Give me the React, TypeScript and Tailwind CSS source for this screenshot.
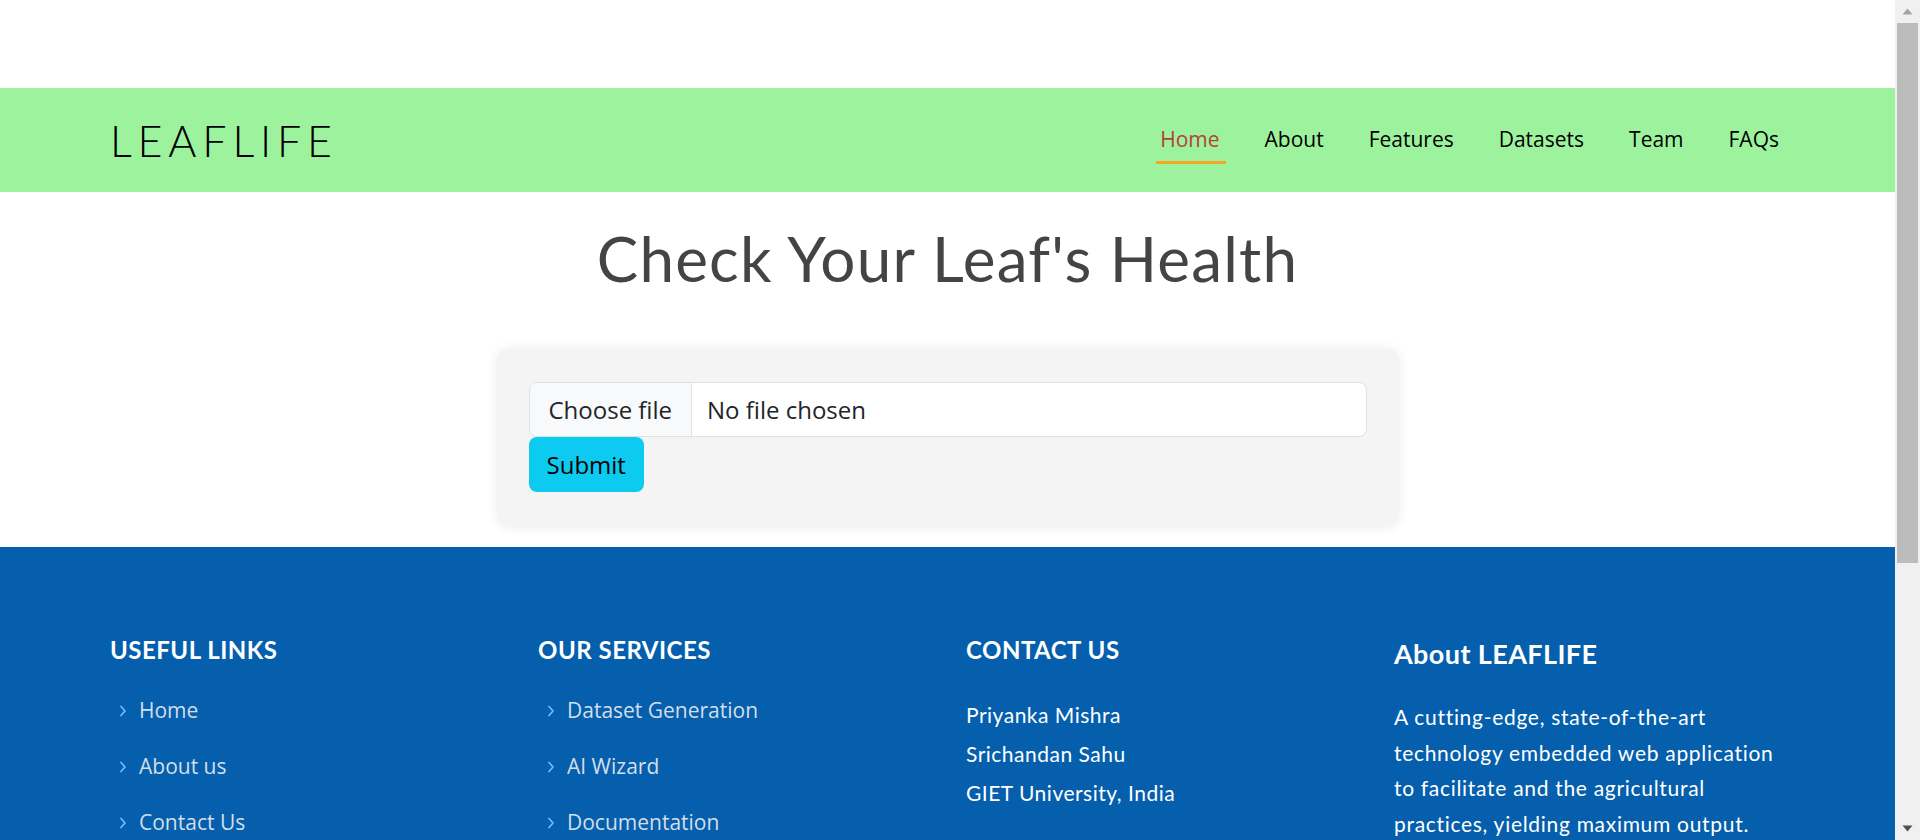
import React from "react";

const navItems = ["Home", "About", "Features", "Datasets", "Team", "FAQs"];

function Chevron() {
  return (
    <svg width="10" height="14" viewBox="0 0 10 14" fill="none" className="shrink-0">
      <path d="M3 2.5 L7 7 L3 11.5" stroke="#74bbf8" strokeWidth="1.7" strokeLinecap="round" strokeLinejoin="round" />
    </svg>
  );
}

function LinkList({ items }: { items: string[] }) {
  return (
    <ul className="mt-[30px] flex flex-col gap-[25px]">
      {items.map((t) => (
        <li key={t} className="flex items-center gap-[11px] pl-[8px] font-['Open_Sans',sans-serif] text-[21px] leading-[31px] text-[#d3deea]">
          <Chevron />
          <span>{t}</span>
        </li>
      ))}
    </ul>
  );
}

function ScrollRail() {
  return (
    <div className="flex w-[25px] shrink-0 flex-col bg-[#f0f0f0]">
      <div className="flex h-[23px] items-center justify-center">
        <svg width="11" height="7" viewBox="0 0 11 7">
          <path d="M5.5 0.5 L10.5 6.5 L0.5 6.5 Z" fill="#a3a3a3" />
        </svg>
      </div>
      <div className="flex-1 px-[2px]">
        <div className="h-[540px] bg-[#bcbcbc]" />
      </div>
      <div className="flex h-[23px] items-center justify-center">
        <svg width="11" height="7" viewBox="0 0 11 7">
          <path d="M0.5 0.5 L10.5 0.5 L5.5 6.5 Z" fill="#505050" />
        </svg>
      </div>
    </div>
  );
}

export default function App() {
  return (
    <div className="flex h-[840px] overflow-hidden bg-white">
      <div className="min-w-0 flex-1 overflow-y-auto [scrollbar-width:none]">
        <div className="h-[88px]" />
        <nav className="flex h-[104px] items-center justify-between bg-[#9df39d] pl-[110px] pr-[111px]">
          <a className="font-['Lato',sans-serif] text-[43px] font-light leading-none tracking-[0.135em] text-black">
            LEAFLIFE
          </a>
          <ul className="flex gap-[35px] pt-[8px]">
            {navItems.map((n, i) => (
              <li key={n} className="relative px-[5px] pb-[10px]">
                <span
                  className={
                    "font-['Open_Sans',sans-serif] text-[21px] leading-[30px] " +
                    (i === 0 ? "text-[#b8403a]" : "text-black")
                  }
                >
                  {n}
                </span>
                {i === 0 && <span className="absolute bottom-[0px] left-[1px] right-[-1px] h-[3px] bg-[#f5a623]" />}
              </li>
            ))}
          </ul>
        </nav>

        <main className="pb-[20px]">
          <h1 className="pt-[26px] text-center font-['Lato',sans-serif] text-[62px] font-normal leading-[80px] tracking-[1.2px] text-[#444444]">
            Check Your Leaf's Health
          </h1>
          <div className="mx-auto mt-[51px] w-[902px] rounded-xl bg-[#f4f4f4] px-[32px] pt-[33px] pb-[35px] shadow-[0_0_12px_rgba(0,0,0,0.08)]">
            <div className="flex h-[55px] overflow-hidden rounded-lg border border-[#dee2e6] bg-white font-['Open_Sans',sans-serif] text-[24px] text-[#212529]">
              <span className="flex items-center border-r border-[#dee2e6] bg-[#f8f9fa] px-[19px]">Choose file</span>
              <span className="flex items-center px-[15px]">No file chosen</span>
            </div>
            <button className="flex h-[55px] items-center rounded-lg bg-[#0dcaf0] px-[18px] font-['Open_Sans',sans-serif] text-[24px] text-black">
              Submit
            </button>
          </div>
        </main>

        <footer className="min-h-[700px] bg-[#055fad] pt-[88px] pb-[60px]">
          <div className="grid grid-cols-[428px_428px_428px_400px] pl-[110px]">
            <div>
              <h4 className="font-['Lato',sans-serif] text-[24px] font-bold leading-[30px] tracking-[0.5px] text-white">USEFUL LINKS</h4>
              <LinkList items={["Home", "About us", "Contact Us"]} />
            </div>
            <div>
              <h4 className="font-['Lato',sans-serif] text-[24px] font-bold leading-[30px] tracking-[0.5px] text-white">OUR SERVICES</h4>
              <LinkList items={["Dataset Generation", "AI Wizard", "Documentation"]} />
            </div>
            <div>
              <h4 className="font-['Lato',sans-serif] text-[24px] font-bold leading-[30px] tracking-[0.5px] text-white">CONTACT US</h4>
              <div className="mt-[30px] flex flex-col font-['Lato',sans-serif] text-[21px] leading-[39px] tracking-[0.5px] text-white">
                <span>Priyanka Mishra</span>
                <span>Srichandan Sahu</span>
                <span>GIET University, India</span>
              </div>
            </div>
            <div>
              <h3 className="pt-[4px] font-['Lato',sans-serif] text-[27px] font-bold leading-[30px] tracking-[0.4px] text-white">About LEAFLIFE</h3>
              <p className="mt-[30px] whitespace-nowrap font-['Lato',sans-serif] text-[21px] leading-[35.5px] tracking-[0.7px] text-white">
                A cutting-edge, state-of-the-art
                <br />
                technology embedded web application
                <br />
                to facilitate and the agricultural
                <br />
                practices, yielding maximum output.
              </p>
            </div>
          </div>
        </footer>
      </div>
      <ScrollRail />
    </div>
  );
}
